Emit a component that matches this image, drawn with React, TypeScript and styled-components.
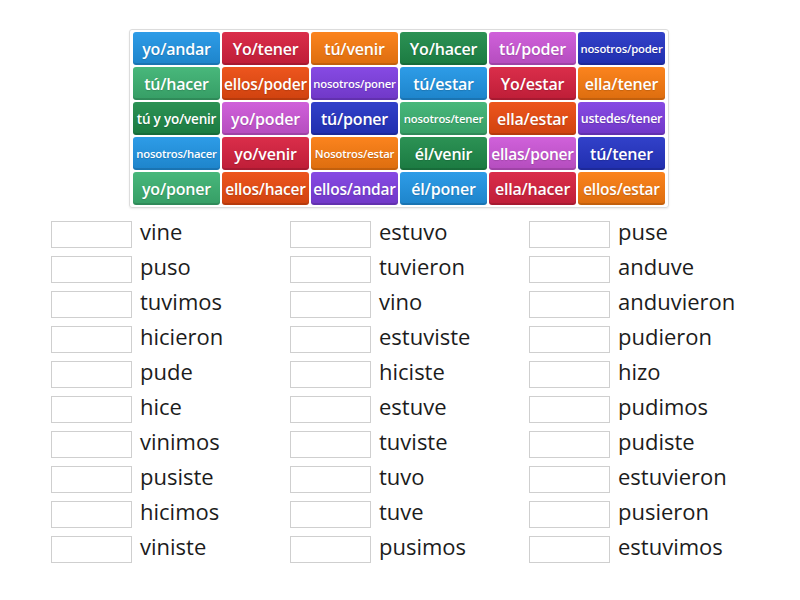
import styled, { createGlobalStyle } from "styled-components";

const GlobalStyle = createGlobalStyle`
  body {
    margin: 0;
    background: #ffffff;
    font-family: "Open Sans", "Noto Sans", sans-serif;
  }
`;

const Page = styled.div`
  width: 800px;
  height: 600px;
  padding-top: 29px;
  box-sizing: border-box;
`;

const Board = styled.div`
  width: 540px;
  margin: 0 auto 0 129px;
  box-sizing: border-box;
  border: 1px solid #dcdcdc;
  border-radius: 3px;
  padding: 2px 2px 2px 3px;
  display: grid;
  grid-template-columns: repeat(6, 87px);
  grid-auto-rows: 33px;
  gap: 2px;
  box-shadow: 0 1px 2px rgba(0, 0, 0, 0.08);
`;

const Tile = styled.div<{ bg: string; size: number }>`
  display: flex;
  align-items: center;
  justify-content: center;
  border-radius: 3px;
  background: ${(p) => p.bg};
  background-image: linear-gradient(
    to bottom,
    rgba(255, 255, 255, 0.06),
    rgba(0, 0, 0, 0.12)
  );
  box-shadow: inset 0 -2px 0 rgba(0, 0, 0, 0.12);
  color: #ffffff;
  font-size: ${(p) => p.size}px;
  font-weight: 600;
  white-space: nowrap;
  letter-spacing: -0.2px;
  text-shadow: 0 1px 1px rgba(0, 0, 0, 0.15);
`;

const Answers = styled.div`
  margin-top: 13px;
  padding-left: 51px;
  display: grid;
  grid-template-columns: repeat(3, 239px);
  grid-auto-rows: 35px;
`;

const Row = styled.div`
  display: flex;
  align-items: flex-start;
  gap: 8px;
`;

const Slot = styled.div`
  width: 81px;
  height: 27px;
  box-sizing: border-box;
  border: 1px solid #cfcfcf;
  background: #ffffff;
  flex-shrink: 0;
`;

const Word = styled.span`
  font-size: 22px;
  line-height: 24px;
  color: #1c1c1c;
  margin-top: -2px;
  white-space: nowrap;
`;

const colors = [
  "#2196e6", // blue
  "#d8213f", // red
  "#fb7c10", // orange
  "#1f8b4a", // dark green
  "#cd57d8", // pink
  "#2535c6", // navy
  "#3db373", // light green
  "#ec4b10", // orange red
  "#7f3fe2", // purple
];

const tiles: [string, number][] = [
  ["yo/andar", 16],
  ["Yo/tener", 16],
  ["tú/venir", 16],
  ["Yo/hacer", 16],
  ["tú/poder", 16],
  ["nosotros/poder", 11.3],
  ["tú/hacer", 16],
  ["ellos/poder", 15.5],
  ["nosotros/poner", 11.3],
  ["tú/estar", 16],
  ["Yo/estar", 16],
  ["ella/tener", 16],
  ["tú y yo/venir", 13.5],
  ["yo/poder", 16],
  ["tú/poner", 16],
  ["nosotros/tener", 11.3],
  ["ella/estar", 16],
  ["ustedes/tener", 12.4],
  ["nosotros/hacer", 11.3],
  ["yo/venir", 16],
  ["Nosotros/estar", 11.3],
  ["él/venir", 16],
  ["ellas/poner", 15.5],
  ["tú/tener", 16],
  ["yo/poner", 16],
  ["ellos/hacer", 15.5],
  ["ellos/andar", 15.5],
  ["él/poner", 16],
  ["ella/hacer", 16],
  ["ellos/estar", 15.5],
];

const columns = [
  ["vine", "puso", "tuvimos", "hicieron", "pude", "hice", "vinimos", "pusiste", "hicimos", "viniste"],
  ["estuvo", "tuvieron", "vino", "estuviste", "hiciste", "estuve", "tuviste", "tuvo", "tuve", "pusimos"],
  ["puse", "anduve", "anduvieron", "pudieron", "hizo", "pudimos", "pudiste", "estuvieron", "pusieron", "estuvimos"],
];

export default function App() {
  const rows = columns[0].map((_, i) => columns.map((c) => c[i]));
  return (
    <Page>
      <GlobalStyle />
      <Board>
        {tiles.map(([label, size], i) => (
          <Tile key={label} bg={colors[i % colors.length]} size={size}>
            {label}
          </Tile>
        ))}
      </Board>
      <Answers>
        {rows.flat().map((w) => (
          <Row key={w}>
            <Slot />
            <Word>{w}</Word>
          </Row>
        ))}
      </Answers>
    </Page>
  );
}
